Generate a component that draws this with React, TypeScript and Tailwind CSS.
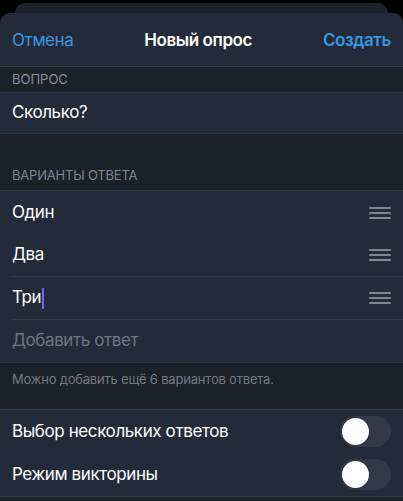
import React from "react";

const options = ["Один", "Два", "Три"];

function Handle() {
  return (
    <div className="flex flex-col gap-[3px] w-[22px]">
      <div className="h-[2px] bg-[#7f8795] rounded" />
      <div className="h-[2px] bg-[#7f8795] rounded" />
      <div className="h-[2px] bg-[#7f8795] rounded" />
    </div>
  );
}

function Toggle() {
  return (
    <div className="w-[51px] h-[31px] rounded-full bg-[#323a49] p-[2px] flex items-center">
      <div className="w-[27px] h-[27px] rounded-full bg-white shadow" />
    </div>
  );
}

export default function App() {
  return (
    <div
      className="w-[403px] h-[501px] bg-black overflow-hidden flex flex-col"
      style={{ fontFamily: "Inter, 'Noto Sans', sans-serif" }}
    >
      {/* card behind */}
      <div className="mx-[15px] mt-[3px] h-[12px] rounded-t-[10px] bg-[#1d222c] shrink-0" />

      <div className="flex-1 -mt-[2px] rounded-t-[10px] bg-[#1b2029] flex flex-col">
        {/* header */}
        <div className="h-[54px] bg-[#232b3a] rounded-t-[10px] flex items-center justify-between px-3 pt-[2px] border-b border-[#333b4a] text-[17px] tracking-[-0.4px]">
          <span className="text-[#3a97e0]">Отмена</span>
          <span className="text-white font-semibold">Новый опрос</span>
          <span className="text-[#3a97e0] font-semibold">Создать</span>
        </div>

        {/* question */}
        <div className="h-[25px] flex items-center pt-[1px] px-3 text-[13px] text-[#8a909b] uppercase">
          Вопрос
        </div>
        <div className="h-[42px] bg-[#232b3a] border-y border-[#2e3645] flex items-center px-3 text-[17px] tracking-[-0.4px] text-white">
          Сколько?
        </div>

        {/* options */}
        <div className="h-[56px] flex items-end px-3 pb-[5px] text-[13px] tracking-[-0.2px] text-[#7f8590] uppercase">
          Варианты ответа
        </div>
        <div className="bg-[#232b3a] border-y border-[#2e3645] text-[17px] tracking-[-0.4px]">
          {options.map((o, i) => (
            <div key={o} className="pl-3">
              <div
                className={`h-[43px] flex items-center justify-between pr-3 ${
                  i > 0 ? "border-b border-[#323a49]" : ""
                }`}
              >
                <span className="text-white flex items-center">
                  {o}
                  {i === 2 && <span className="inline-block w-[2px] h-[21px] bg-[#5b6cf0] ml-[1px]" />}
                </span>
                <Handle />
              </div>
            </div>
          ))}
          <div className="h-[42px] flex items-center px-3 text-[#6f7683]">
            Добавить ответ
          </div>
        </div>
        <div className="h-[46px] px-3 pt-[7px] text-[13px] tracking-[-0.2px] text-[#747a85]">
          Можно добавить ещё 6 вариантов ответа.
        </div>

        {/* settings */}
        <div className="bg-[#232b3a] border-y border-[#333b4a] text-[17px] tracking-[-0.4px]">
          <div className="h-[43px] flex items-center justify-between px-3">
            <span className="text-white">Выбор нескольких ответов</span>
            <Toggle />
          </div>
          <div className="h-[43px] flex items-center justify-between px-3">
            <span className="text-white">Режим викторины</span>
            <Toggle />
          </div>
        </div>
      </div>
    </div>
  );
}
